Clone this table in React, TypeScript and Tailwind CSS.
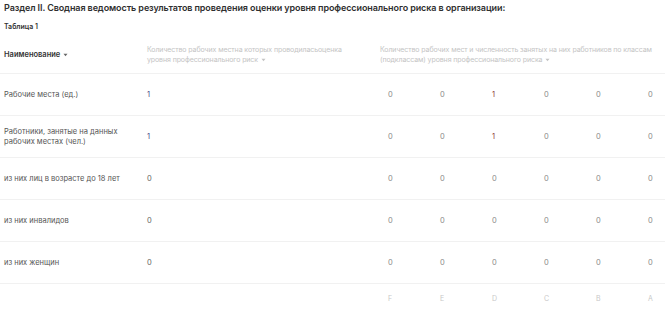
type Row = {
  label: string;
  total: number;
  byClass: number[];
};

const rows: Row[] = [
  { label: "Рабочие места (ед.)", total: 1, byClass: [0, 0, 1, 0, 0, 0] },
  { label: "Работники, занятые на данных рабочих местах (чел.)", total: 1, byClass: [0, 0, 1, 0, 0, 0] },
  { label: "из них лиц в возрасте до 18 лет", total: 0, byClass: [0, 0, 0, 0, 0, 0] },
  { label: "из них инвалидов", total: 0, byClass: [0, 0, 0, 0, 0, 0] },
  { label: "из них женщин", total: 0, byClass: [0, 0, 0, 0, 0, 0] },
];

const classes = ["F", "E", "D", "C", "B", "A"];

// small sort caret next to column titles
function Caret({ color }: { color: string }) {
  return (
    <svg width="5" height="4" viewBox="0 0 5 4" className="ml-[3px] inline-block align-middle">
      <path d="M0.5 0.8h4L2.5 3.2z" fill={color} />
    </svg>
  );
}

export default function App() {
  return (
    <div className="w-[665px] h-[314px] overflow-hidden bg-white font-['Inter','Noto_Sans',sans-serif] text-[#444]">
      <h2 className="px-1 pt-[2px] text-[9px] font-semibold leading-[12px] text-[#2f2f2f] tracking-[-0.1px]">
        Раздел II. Сводная ведомость результатов проведения оценки уровня профессионального риска в организации:
      </h2>
      <p className="px-1 mt-[8px] text-[7px] font-semibold leading-[10px] text-[#333]">Таблица 1</p>

      <div className="mt-[5px] w-[692px]">
        {/* header */}
        <div className="grid grid-cols-[147px_233px_285px] h-[37px] items-center border-b border-[#f1f1f1]">
          <div className="pl-1 text-[7.5px] font-semibold text-[#333]">
            Наименование<Caret color="#666" />
          </div>
          <div className="max-w-[206px] text-[7px] leading-[10px] text-[#c4c4c4] tracking-[-0.1px]">
            Количество рабочих местна которых проводиласьоценка уровня профессионального риск<Caret color="#c4c4c4" />
          </div>
          <div className="text-[7px] leading-[10px] text-[#c4c4c4] tracking-[-0.1px]">
            Количество рабочих мест и численность занятых на них работников по классам (подклассам) уровня профессионального риска<Caret color="#c4c4c4" />
          </div>
        </div>

        {rows.map((r) => (
          <div
            key={r.label}
            className="grid grid-cols-[147px_233px_repeat(6,52px)] h-[42px] items-center border-b border-[#f1f1f1] text-[7.5px] leading-[10px]"
          >
            <div className="pl-1 pr-4 text-[#555]">{r.label}</div>
            <div className={r.total ? "text-[#4b4b86]" : "text-[#666]"}>{r.total}</div>
            {r.byClass.map((v, i) => (
              <div key={i} className={`pl-2 ${v ? "text-[#8e3b3b]" : "text-[#8a8a8a]"}`}>
                {v}
              </div>
            ))}
          </div>
        ))}

        <div className="grid grid-cols-[147px_233px_repeat(6,52px)] h-[30px] items-center text-[7px] text-[#c8c8c8]">
          <div />
          <div />
          {classes.map((c) => (
            <div key={c} className="pl-2">{c}</div>
          ))}
        </div>
      </div>
    </div>
  );
}
